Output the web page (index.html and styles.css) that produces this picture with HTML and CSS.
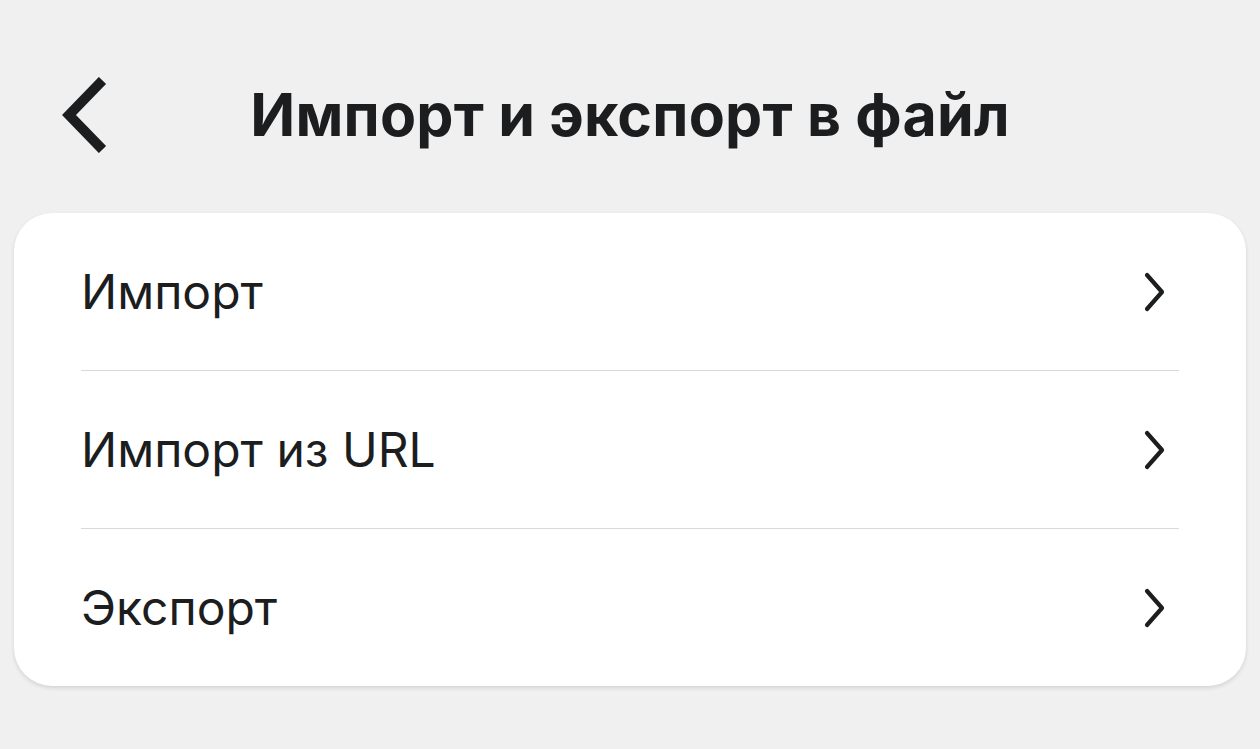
FILE: index.html
```html
<!DOCTYPE html>
<html lang="ru">
<head>
<meta charset="utf-8">
<link rel="stylesheet" href="styles.css">
</head>
<body>
<div class="page">
  <header class="topbar">
    <div class="back" aria-label="Назад">
      <svg width="48" height="76" viewBox="0 0 48 76"><path d="M38 7 L8 38 L38 69" fill="none" stroke="#1b1d1f" stroke-width="10" stroke-linecap="square" stroke-linejoin="miter"/></svg>
    </div>
    <h1 class="title">Импорт и экспорт в файл</h1>
  </header>
  <section class="card">
    <div class="row"><span class="label">Импорт</span><svg class="chev" width="26" height="44" viewBox="0 0 26 44"><path d="M6 5 L21 22 L6 39" fill="none" stroke="#1b1d1f" stroke-width="4.2" stroke-linecap="round" stroke-linejoin="round"/></svg></div>
    <div class="row"><span class="label">Импорт из URL</span><svg class="chev" width="26" height="44" viewBox="0 0 26 44"><path d="M6 5 L21 22 L6 39" fill="none" stroke="#1b1d1f" stroke-width="4.2" stroke-linecap="round" stroke-linejoin="round"/></svg></div>
    <div class="row"><span class="label">Экспорт</span><svg class="chev" width="26" height="44" viewBox="0 0 26 44"><path d="M6 5 L21 22 L6 39" fill="none" stroke="#1b1d1f" stroke-width="4.2" stroke-linecap="round" stroke-linejoin="round"/></svg></div>
  </section>
</div>
</body>
</html>
```
FILE: styles.css
```css
html, body {
  margin: 0;
  padding: 0;
  background: #f0f0f0;
  font-family: "Inter", "Noto Sans", sans-serif;
  color: #1b1d1f;
}
.page {
  width: 1260px;
  height: 749px;
  padding: 0 14px;
  box-sizing: border-box;
}
.topbar {
  height: 213px;
  display: flex;
  align-items: center;
  justify-content: center;
  position: relative;
  padding-top: 16px;
  box-sizing: border-box;
}
.back {
  position: absolute;
  left: 47px;
  top: 77px;
  width: 48px;
  height: 76px;
}
.back svg { display: block; }
.title {
  margin: 0;
  font-size: 59px;
  font-weight: 700;
  letter-spacing: 0.2px;
}
.card {
  background: #fff;
  border-radius: 38px;
  box-shadow: 0 2px 4px rgba(0,0,0,0.12);
  padding: 0 67px;
}
.row {
  height: 157px;
  display: flex;
  align-items: center;
  justify-content: space-between;
  border-bottom: 1.5px solid #d9d9d9;
  padding-right: 12px;
}
.row:last-child { border-bottom: 0; }
.label {
  font-size: 48px;
  font-weight: 400;
  letter-spacing: 0;
}
.chev { display: block; }
```
